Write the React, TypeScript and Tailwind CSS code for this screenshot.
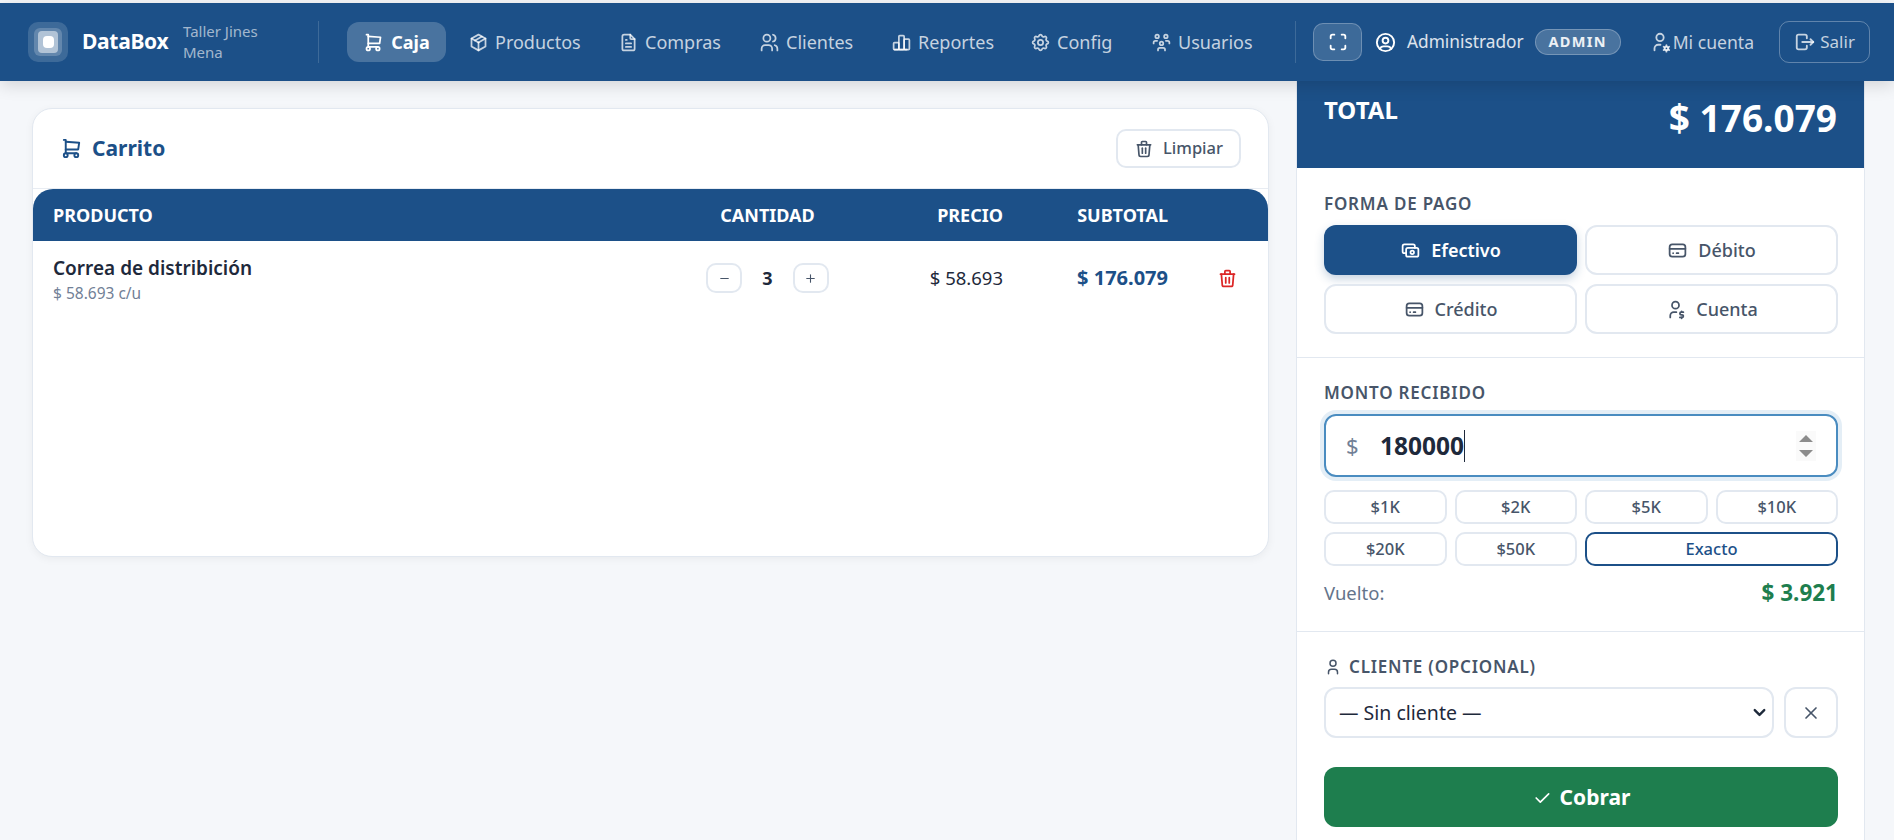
import {
  TbShoppingCart,
  TbPackage,
  TbFileText,
  TbUsers,
  TbChartBar,
  TbSettings,
  TbUsersGroup,
  TbMaximize,
  TbUserCircle,
  TbUserCog,
  TbLogout,
  TbTrash,
  TbCash,
  TbCreditCard,
  TbUserDollar,
  TbUser,
  TbX,
  TbCheck,
  TbChevronDown,
  TbMinus,
  TbPlus,
} from "react-icons/tb";

const navItems = [
  { label: "Productos", icon: TbPackage, cls: "ml-[22px] w-[110px]" },
  { label: "Compras", icon: TbFileText, cls: "ml-[40px] w-[102px]" },
  { label: "Clientes", icon: TbUsers, cls: "ml-[39px] w-[94px]" },
  { label: "Reportes", icon: TbChartBar, cls: "ml-[38px] w-[100px]" },
  { label: "Config", icon: TbSettings, cls: "ml-[39px] w-[82px]" },
  { label: "Usuarios", icon: TbUsersGroup, cls: "ml-[39px] w-[99px]" },
];

const quickAmounts = ["$1K", "$2K", "$5K", "$10K", "$20K", "$50K"];

function Header() {
  return (
    <header className="relative z-10 flex h-[78px] shrink-0 items-center bg-[#1c5088] pl-[28px] shadow-[0_4px_16px_rgba(0,0,0,0.14)]">
      <div className="flex h-10 w-10 items-center justify-center rounded-[10px] bg-white/15">
        <div className="flex h-7 w-7 items-center justify-center rounded-md bg-white/20">
          <div className="flex h-[22px] w-[20px] items-center justify-center rounded bg-white/50">
            <div className="h-[12px] w-[11px] rounded-sm bg-white" />
          </div>
        </div>
      </div>
      <span className="ml-[14px] w-[101px] text-[21px] font-bold tracking-[-0.3px] text-white">DataBox</span>
      <div className="w-[135px] text-[15px] leading-[21px] text-white/60">
        <div>Taller Jines</div>
        <div>Mena</div>
      </div>
      <div className="h-[42px] w-px bg-white/15" />

      <a className="ml-[28px] flex h-10 w-[99px] items-center justify-center gap-[7px] rounded-[12px] bg-white/20 text-[18px] font-bold text-white">
        <TbShoppingCart className="text-[21px]" />
        Caja
      </a>
      {navItems.map((item) => (
        <a key={item.label} className={`flex items-center gap-[6px] text-[18px] text-white/75 ${item.cls}`}>
          <item.icon className="shrink-0 text-[21px]" />
          {item.label}
        </a>
      ))}

      <div className="ml-[45px] h-[42px] w-px bg-white/15" />
      <button className="ml-[17px] flex h-[38px] w-[49px] items-center justify-center rounded-[10px] border border-white/25 bg-white/15 text-white">
        <TbMaximize className="text-[22px]" />
      </button>
      <TbUserCircle className="ml-[12px] text-[23px] text-white" />
      <span className="ml-[10px] text-[17.3px] text-white/85">Administrador</span>
      <span className="ml-[11px] flex h-[26px] w-[86px] items-center justify-center rounded-full border border-white/25 bg-white/20 text-[14.5px] font-bold tracking-[1.3px] text-white/90">
        ADMIN
      </span>
      <TbUserCog className="ml-[28px] text-[22px] text-white/75" />
      <span className="ml-[2px] text-[17.6px] text-white/75">Mi cuenta</span>
      <button className="ml-[25px] flex h-[42px] w-[91px] items-center justify-center gap-[4px] rounded-[10px] border border-white/30 text-[17px] text-white/75">
        <TbLogout className="text-[22px]" />
        Salir
      </button>
    </header>
  );
}

function Cart() {
  return (
    <div className="h-[449px] rounded-[20px] border border-[#e2e8f0] bg-white shadow-[0_2px_8px_rgba(0,0,0,0.05)]">
      <div className="flex h-[80px] items-center justify-between border-b border-[#e8ecf2] pr-[27px] pl-[27px]">
        <div className="flex items-center gap-[9px] text-[21px] font-bold text-[#1c5088]">
          <TbShoppingCart className="text-[23px]" />
          Carrito
        </div>
        <button className="flex h-[39px] w-[125px] items-center justify-center gap-[9px] rounded-[10px] border-2 border-[#e2e8f0] text-[16.5px] font-medium text-[#475569]">
          <TbTrash className="text-[20px]" />
          Limpiar
        </button>
      </div>
      <div className="flex h-[52px] items-center rounded-t-[20px] bg-[#1c5088] pl-[20px] text-[18px] font-bold text-white">
        <div className="w-[650px]">PRODUCTO</div>
        <div className="w-[129px] text-center">CANTIDAD</div>
        <div className="w-[171px] text-right">PRECIO</div>
        <div className="w-[165px] text-right">SUBTOTAL</div>
      </div>
      <div className="flex h-[74px] items-center pl-[20px]">
        <div className="w-[650px] pt-[2px]">
          <div className="text-[19px] leading-[25px] font-semibold text-[#1e293b]">Correa de distribición</div>
          <div className="mt-[2px] text-[15.5px] leading-[20px] text-[#718096]">$ 58.693 c/u</div>
        </div>
        <div className="flex w-[129px] items-center justify-between px-[3px]">
          <button className="flex h-[30px] w-[36px] items-center justify-center rounded-[10px] border-2 border-[#e2e8f0] text-[#475569]">
            <TbMinus className="text-[13px]" />
          </button>
          <span className="text-[18px] font-bold text-[#1e293b]">3</span>
          <button className="flex h-[30px] w-[36px] items-center justify-center rounded-[10px] border-2 border-[#e2e8f0] text-[#475569]">
            <TbPlus className="text-[13px]" />
          </button>
        </div>
        <div className="w-[171px] text-right text-[18.5px] text-[#1e293b]">$ 58.693</div>
        <div className="w-[165px] text-right text-[20px] font-bold text-[#1c5088]">$ 176.079</div>
        <TbTrash className="ml-[49px] text-[21px] text-[#dc2626]" />
      </div>
    </div>
  );
}

function PayButton({ label, Icon, active }: { label: string; Icon: typeof TbCash; active?: boolean }) {
  return (
    <button
      className={
        active
          ? "flex h-[50px] items-center justify-center gap-[10px] rounded-[12px] bg-[#1c5088] text-[18px] font-semibold text-white shadow-[0_4px_10px_rgba(28,80,136,0.25)]"
          : "flex h-[50px] items-center justify-center gap-[10px] rounded-[12px] border-2 border-[#e2e8f0] bg-white text-[18px] font-medium text-[#475569]"
      }
    >
      <Icon className="text-[21px]" />
      {label}
    </button>
  );
}

function Checkout() {
  return (
    <aside className="h-[759px] w-[569px] shrink-0 overflow-hidden border-x border-[#e2e8f0] bg-white">
      <div className="flex h-[87px] items-start justify-between bg-[#1c5088] px-[27px] text-white">
        <span className="mt-[11px] text-[24px] font-bold">TOTAL</span>
        <span className="mt-[9px] text-[37px] font-bold">$ 176.079</span>
      </div>

      <div className="h-[190px] border-b border-[#e2e8f0] pt-[24px] pr-[26px] pl-[27px]">
        <div className="text-[17px] leading-[24px] font-semibold tracking-[0.8px] text-[#475569]">FORMA DE PAGO</div>
        <div className="mt-[9px] grid grid-cols-2 gap-x-[8px] gap-y-[9px]">
          <PayButton label="Efectivo" Icon={TbCash} active />
          <PayButton label="Débito" Icon={TbCreditCard} />
          <PayButton label="Crédito" Icon={TbCreditCard} />
          <PayButton label="Cuenta" Icon={TbUserDollar} />
        </div>
      </div>

      <div className="h-[274px] border-b border-[#e2e8f0] pt-[23px] pr-[26px] pl-[27px]">
        <div className="text-[17px] leading-[24px] font-semibold tracking-[0.8px] text-[#475569]">MONTO RECIBIDO</div>
        <div className="mt-[9px] flex h-[63px] items-center rounded-[12px] border-2 border-[#4a8cc0] pr-[20px] pl-[20px] shadow-[0_0_0_4px_rgba(74,140,192,0.15)]">
          <span className="w-[34px] text-[22px] text-[#718096]">$</span>
          <span className="pt-[2px] text-[24.5px] font-bold text-[#1e293b]">180000</span>
          <span className="h-[32px] w-px bg-[#1e293b]" />
          <svg className="ml-auto h-[30px] w-[20px] bg-[#fafafa]" viewBox="0 0 20 30">
            <path d="M10 4l7 7H3zM10 26l7-7H3z" fill="#8c8c8c" />
          </svg>
        </div>
        <div className="mt-[13px] grid grid-cols-4 gap-x-[8px] gap-y-[8px]">
          {quickAmounts.map((amount) => (
            <button key={amount} className="h-[34px] rounded-[10px] border-2 border-[#e2e8f0] text-[16.5px] font-medium text-[#475569]">
              {amount}
            </button>
          ))}
          <button className="col-span-2 h-[34px] rounded-[10px] border-2 border-[#1c5088] text-[16.5px] font-medium text-[#1c5088]">
            Exacto
          </button>
        </div>
        <div className="mt-[13px] flex items-center justify-between">
          <span className="text-[18.5px] text-[#64748b]">Vuelto:</span>
          <span className="text-[22.5px] leading-[27px] font-bold text-[#1e7e4e]">$ 3.921</span>
        </div>
      </div>

      <div className="pt-[23px] pr-[26px] pl-[27px]">
        <div className="flex items-center gap-[7px] text-[17px] leading-[24px] font-semibold tracking-[0.8px] text-[#475569]">
          <TbUser className="text-[18px]" />
          CLIENTE (OPCIONAL)
        </div>
        <div className="mt-[8px] flex gap-[10px]">
          <div className="relative flex-1">
            <select className="h-[51px] w-full appearance-none rounded-[12px] border-2 border-[#e2e8f0] bg-white pl-[13px] text-[19.5px] text-[#1e293b]">
              <option>— Sin cliente —</option>
            </select>
            <TbChevronDown className="pointer-events-none absolute top-[16px] right-[5px] text-[19px] stroke-[3] text-[#1e293b]" />
          </div>
          <button className="flex h-[51px] w-[54px] items-center justify-center rounded-[12px] border-2 border-[#e2e8f0] text-[#475569]">
            <TbX className="text-[20px]" />
          </button>
        </div>
        <button className="mt-[29px] flex h-[60px] w-full items-center justify-center gap-[8px] rounded-[12px] bg-[#1e7e4e] pt-[1px] text-[21px] font-bold text-white">
          <TbCheck className="text-[20px]" />
          Cobrar
        </button>
      </div>
    </aside>
  );
}

export default function App() {
  return (
    <div className="flex h-[840px] flex-col overflow-hidden bg-[#f5f7fa] pt-[3px] font-['Noto_Sans',sans-serif]">
      <Header />
      <main className="flex flex-1 justify-between pr-[29px]">
        <div className="flex-1 pt-[27px] pr-[27px] pl-[32px]">
          <Cart />
        </div>
        <Checkout />
      </main>
    </div>
  );
}
